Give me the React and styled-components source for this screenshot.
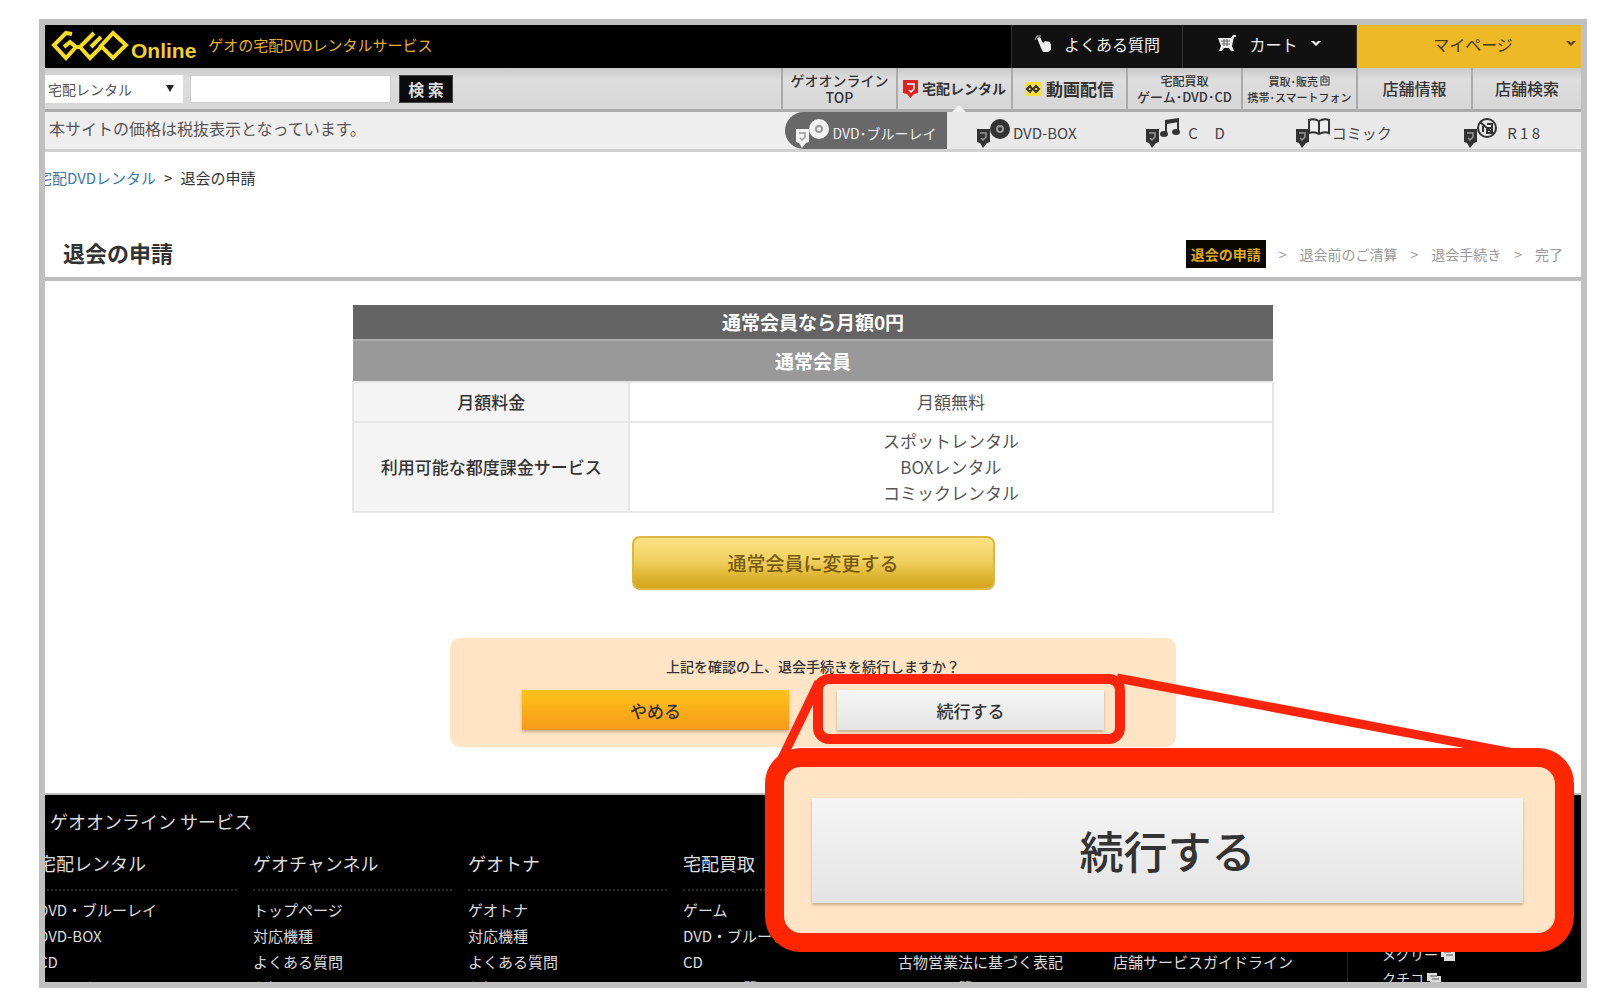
import React from "react";
import styled, { createGlobalStyle, css } from "styled-components";

const GlobalStyle = createGlobalStyle`
  * { box-sizing: border-box; }
  body {
    margin: 0;
    background: #fff;
    color: #333;
    font-family: "Noto Sans CJK JP", "Noto Sans", sans-serif;
    font-size: 15px;
  }
  a { color: inherit; text-decoration: none; }
  h1, h2, h3, p, ul, ol { margin: 0; padding: 0; list-style: none; }
  button, input, select { font-family: inherit; margin: 0; }
`;

const Page = styled.div`
  height: 100vh;
  padding: 19px 13px 15px 39px;
`;

const Frame = styled.div`
  display: flex;
  flex-direction: column;
  height: 100%;
  border: 6px solid #c0c0c0;
  overflow: hidden;
`;

const TopBar = styled.header`
  display: flex;
  flex: none;
  height: 43px;
  background: #000;
`;

const Brand = styled.div`
  display: flex;
  flex: 1;
  align-items: center;
  padding-left: 6px;
`;

const BrandName = styled.span`
  padding: 8px 0 0 2px;
  color: #f3cf2c;
  font: bold 21px/24px "Liberation Sans", sans-serif;
`;

const Tagline = styled.p`
  padding: 0 0 4px 12px;
  color: #e8b021;
  font-size: 15px;
  line-height: 36px;
`;

const TopLink = styled.a`
  display: flex;
  align-items: center;
  justify-content: ${(p) => (p.$spread ? "flex-end" : "center")};
  gap: 12px;
  width: ${(p) => p.$width}px;
  padding: 0 ${(p) => (p.$spread ? 4 : 0)}px 6px 0;
  border-left: 1px solid #333;
  background: ${(p) => (p.$gold ? "#edb926" : "#111")};
  color: ${(p) => (p.$gold ? "#4a3a10" : "#eee")};
  font-size: 16px;
`;

const MyPageLabel = styled.span`
  flex: 1;
  padding-left: 36px;
  text-align: center;
`;

const SearchBar = styled.div`
  display: flex;
  flex: none;
  height: 44px;
  border-bottom: 3px solid #ababab;
  background: linear-gradient(#c9c9c9, #dedede 12px, #d6d6d6);
`;

const SearchForm = styled.form`
  display: flex;
  flex: 1;
  align-items: center;
`;

const SelectWrap = styled.label`
  position: relative;
  width: 138px;
  height: 28px;
  margin-right: 7px;
  background: #fff;

  &::after {
    content: "";
    position: absolute;
    top: 10px;
    right: 9px;
    border: 4px solid transparent;
    border-top: 7px solid #222;
  }
`;

const CategorySelect = styled.select`
  width: 100%;
  height: 28px;
  padding: 0 3px;
  border: 0;
  appearance: none;
  background: transparent;
  color: #555;
  font-size: 14px;
`;

const SearchInput = styled.input`
  width: 201px;
  height: 28px;
  border: 1px solid #ccc;
  background: #fff;
`;

const SearchButton = styled.button`
  width: 54px;
  height: 28px;
  margin-left: 8px;
  padding: 0;
  border: 1px solid #444;
  background: #0b0b0b;
  color: #ddd;
  font-size: 16px;
  font-weight: bold;
  line-height: 24px;
`;

const ServiceNav = styled.nav`
  display: flex;
  width: 800px;
`;

const ServiceLink = styled.a`
  position: relative;
  display: flex;
  flex: 0 0 115px;
  align-items: center;
  justify-content: center;
  gap: 4px;
  border-left: 2px solid #aaa;
  color: #333;
  font-size: ${(p) => p.$size || 14}px;
  font-weight: ${(p) => (p.$bold ? 700 : 500)};
  line-height: 17px;
  text-align: center;
  white-space: nowrap;

  &:last-child { flex: 1; }

  ${(p) => p.$current && css`
    &::after {
      content: "";
      position: absolute;
      bottom: -3px;
      left: 54px;
      border: 7px solid transparent;
      border-top: 0;
      border-bottom-color: #f0f0f0;
    }
  `}
`;

const SmallLine = styled.span`
  display: block;
  font-size: ${(p) => p.$size}px;
  line-height: 16px;
`;

const NoticeBar = styled.div`
  display: flex;
  flex: none;
  height: 40px;
  border-bottom: 3px solid #d0d0d0;
  background: #efeeef;
`;

const Notice = styled.p`
  flex: 1;
  padding-left: 4px;
  color: #555;
  font-size: 16px;
  line-height: 32px;
`;

const CategoryNav = styled.nav`
  display: flex;
  width: 796px;
  background: #eae9ea;
  border-radius: 20px 0 0 20px;
`;

const CategoryLink = styled.a`
  display: flex;
  flex: 1;
  align-items: center;
  justify-content: center;
  gap: 2px;
  padding-top: 4px;
  color: ${(p) => (p.$current ? "#eee" : "#444")};
  font-size: ${(p) => (p.$current ? 14 : 15)}px;
  white-space: pre;

  ${(p) => p.$current && css`
    flex: 0 0 162px;
    border-radius: 20px 0 0 20px;
    background: #686868;
  `}
`;

const Main = styled.main`
  flex: none;
`;

const Breadcrumb = styled.nav`
  padding-top: 16px;
  margin-left: -8px;
  font-size: 15px;
  line-height: 20px;

  a { color: #3b78ab; }
  span { padding: 0 8px; }
`;

const TitleRow = styled.div`
  display: flex;
  align-items: center;
  justify-content: space-between;
  height: 93px;
  padding: 38px 18px 0;
  border-bottom: 4px solid #bebebe;
`;

const Title = styled.h1`
  font-size: 22px;
  line-height: 30px;
`;

const Steps = styled.ol`
  display: flex;
  align-items: center;
  gap: 13px;
  padding-top: 4px;
  color: #999;
  font-size: 14px;
  line-height: 28px;
`;

const Step = styled.li`
  ${(p) => p.$current && css`
    padding: 0 5px;
    background: #0a0800;
    color: #dba91c;
    font-weight: bold;
  `}
`;

const PlanTable = styled.table`
  width: 60%;
  margin: 24px auto 0;
  border-collapse: collapse;
  font-size: 17px;
  line-height: 26px;
  text-align: center;

  tbody th, td { border: 2px solid #e6e6e6; }
  tbody th { width: 30%; background: #f4f4f4; font-weight: 500; }
  td { color: #555; }
`;

const PlanHead = styled.th`
  height: ${(p) => (p.$sub ? 42 : 35)}px;
  padding: 0;
  background: ${(p) => (p.$sub ? "#999" : "#646464")};
  border-top: ${(p) => (p.$sub ? "2px solid #ababab" : "0")};
  color: #fff;
  font-size: 19px;
`;

const PlanRow = styled.tr`
  th, td { padding: ${(p) => (p.$tall ? 5 : 6)}px 0; }
`;

const ChangeButton = styled.button`
  display: block;
  width: 363px;
  height: 54px;
  margin: 23px auto 48px;
  padding: 0 0 2px;
  border: 2px solid #dfb643;
  border-radius: 8px;
  background: linear-gradient(#fde285, #f0d060 45%, #dcb22c 80%, #d3a51c);
  color: #795a10;
  font-size: 19px;
  font-weight: 500;
`;

const ConfirmBox = styled.section`
  position: relative;
  z-index: 1;
  width: 726px;
  height: 109px;
  margin: 0 auto 46px;
  padding-top: 17px;
  border-radius: 10px;
  background: #ffe5c6;
  text-align: center;
`;

const Question = styled.p`
  color: #333;
  font-size: 14px;
  font-weight: 500;
  line-height: 22px;
`;

const Choices = styled.div`
  display: flex;
  justify-content: center;
  gap: 48px;
  padding-top: 13px;
`;

const ChoiceButton = styled.button`
  width: ${(p) => (p.$large ? 711 : 267)}px;
  height: ${(p) => (p.$large ? 105 : 40)}px;
  padding: 0;
  border: 0;
  background: ${(p) => (p.$gold ? "linear-gradient(#ffc31c, #f69a18)" : "linear-gradient(#f5f5f5, #e4e4e4)")};
  box-shadow: 0 2px 3px rgba(90, 70, 40, 0.35);
  color: #333;
  font-size: ${(p) => (p.$large ? 44 : 17)}px;
  font-weight: 500;
`;

const Highlight = styled.div`
  position: absolute;
  top: 36px;
  left: 363px;
  width: 312px;
  height: 70px;
  border: 10px solid #fc250c;
  border-radius: 16px;
  pointer-events: none;
`;

const Pointer = styled.svg`
  position: absolute;
  top: 32px;
  left: 315px;
  pointer-events: none;
`;

const Magnified = styled.div`
  position: absolute;
  top: 110px;
  left: 315px;
  display: flex;
  align-items: center;
  justify-content: center;
  width: 809px;
  height: 204px;
  padding-right: 4px;
  border: 19px solid #ff2600;
  border-radius: 36px;
  background: #ffe5c6;
`;

const Footer = styled.footer`
  flex: 1;
  min-height: 0;
  border-top: 2px solid #bbb;
  background: #000;
  color: #ddd;
  overflow: hidden;
`;

const FooterTitle = styled.h2`
  padding: 12px 0 0 5px;
  font-size: 18px;
  font-weight: 400;
  line-height: 28px;
`;

const FooterColumns = styled.div`
  display: flex;
  gap: 16px;
  margin-left: -7px;
`;

const FooterColumn = styled.section`
  flex: 0 0 199px;
  padding-top: ${(p) => (p.$low ? 114 : 14)}px;
  white-space: nowrap;
`;

const FooterHead = styled.h3`
  height: 42px;
  border-bottom: 2px dotted #2b2b2b;
  font-size: 18px;
  font-weight: 400;
  line-height: 28px;
`;

const FooterList = styled.ul`
  padding-top: ${(p) => (p.$flush ? 0 : 6)}px;
  font-size: 15px;
  line-height: 26px;
`;

const SideColumn = styled.section`
  flex: 1;
  margin: 107px 0 0 19px;
  padding-left: 34px;
  border-left: 1px solid #222;
  font-size: 14px;
  line-height: 24px;

  svg { vertical-align: -1px; }
`;

const GeoLogo = () => (
  <svg width="78" height="36" viewBox="0 0 78 36" fill="none" stroke="#f7dc22" strokeWidth="4">
    <path d="M21 5 15 4 3 16 15 29 25 18 19 13 13 18" />
    <path d="M43 4 29 18 25 18M29 18 39 29 50 18M40 18 50 8M34 13 43 4" />
    <path d="M62 4 75 16 62 29 50 17Z" />
  </svg>
);

const Chevron = ({ color }) => (
  <svg width="12" height="7" viewBox="0 0 12 7"><path d="M1 1h3l2 2 2-2h3L6 6Z" fill={color} /></svg>
);

const HandIcon = () => (
  <svg width="18" height="18" viewBox="0 0 18 18" fill="#eee">
    <path d="M3 3l3-1 3 6 2-2 5 1 1 3v5l-3 2H9l-2-4z" />
    <path d="M1 5 3 1h4" stroke="#bbb" fill="none" />
  </svg>
);

const CartIcon = () => (
  <svg width="20" height="18" viewBox="0 0 20 18">
    <path d="M1 3h13l2-3h3v2h-2l-2 9 2 5h-3l-2-3H7l-2 3H2l2-5z" fill="#eee" />
    <path d="M4 6h9M5 9h8M7 4v7M10 4v7" stroke="#666" />
  </svg>
);

const ShieldIcon = () => (
  <svg width="15" height="19" viewBox="0 0 15 19">
    <path d="M0 1h15v13l-4 1-3.500 4L4 15l-4-1z" fill="#e02020" />
    <path d="M4 5h7v5l-3 3-2-2" fill="none" stroke="#fff" strokeWidth="1.500" />
  </svg>
);

const ChannelIcon = () => (
  <svg width="17" height="14" viewBox="0 0 17 14">
    <rect width="17" height="14" rx="3" fill="#f6e13a" />
    <path d="M2 7 5 4 7 7 5 10ZM8 7 11 4 14 7 11 10Z" fill="none" stroke="#333" strokeWidth="2" />
  </svg>
);

const PhoneIcon = () => (
  <svg width="10" height="11" viewBox="0 0 10 11" fill="none" stroke="#333">
    <rect x="1" y="2" width="8" height="8" /><path d="M3 4h4v3H3zM4 0v2" />
  </svg>
);

const pictures = {
  disc: (c, hole) => (
    <g><circle cx="24" cy="11" r="10" fill={c} /><circle cx="24" cy="11" r="4" fill={hole} /><circle cx="24" cy="11" r="2" fill={c} /></g>
  ),
  note: (c) => (
    <g fill={c}><path d="M20 2 34 0v4L22 6v10h-2zM32 2h2v12h-2z" /><ellipse cx="19" cy="16" rx="4" ry="3" /><ellipse cx="31" cy="14" rx="4" ry="3" /></g>
  ),
  book: (c) => (
    <path d="M24 3Q19 0 14 2V15Q19 13 24 16Q29 13 34 15V2Q29 0 24 3V16" fill="#eee" stroke={c} strokeWidth="2" />
  ),
  adult: (c) => (
    <g fill="none" stroke={c} strokeWidth="2"><circle cx="24" cy="10" r="9" /><path d="M17 4 31 16M20 6v8M24 6h5v4h-5v5h5v-5" /></g>
  ),
};

const CategoryIcon = ({ kind, color = "#333", hole = "#999" }) => (
  <svg width="35" height="30" viewBox="0 0 35 30">
    {pictures[kind](color, hole)}
    <path d="M1 11h13v13l-3 1-4 5-3-5-3-1z" fill={color} />
    <path d="M4 15h6v4l-3 3-2-2" fill="none" stroke={hole} strokeWidth="1.500" />
  </svg>
);

const WindowIcon = () => (
  <svg width="14" height="12" viewBox="0 0 14 12">
    <path d="M0 0h10v3h4v9H3V8H0z" fill="#ddd" /><path d="M3 3h7M5 6h7" stroke="#555" />
  </svg>
);

const footerColumns = [
  { head: "宅配レンタル", items: ["DVD・ブルーレイ", "DVD-BOX", "CD", "コミック"] },
  { head: "ゲオチャンネル", items: ["トップページ", "対応機種", "よくある質問", "お知らせ"] },
  { head: "ゲオトナ", items: ["ゲオトナ", "対応機種", "よくある質問", "お知らせ"] },
  { head: "宅配買取", items: ["ゲーム", "DVD・ブルーレイ", "CD", "よくある質問"] },
];

export default function App() {
  return (
    <Page>
      <GlobalStyle />
      <Frame>
        <TopBar>
          <Brand>
            <GeoLogo />
            <BrandName>Online</BrandName>
            <Tagline>ゲオの宅配DVDレンタルサービス</Tagline>
          </Brand>
          <TopLink href="#faq" $width={171}><HandIcon />よくある質問</TopLink>
          <TopLink href="#cart" $width={174}><CartIcon />カート<Chevron color="#eee" /></TopLink>
          <TopLink href="#mypage" $width={225} $gold $spread>
            <MyPageLabel>マイページ</MyPageLabel><Chevron color="#5a4510" />
          </TopLink>
        </TopBar>

        <SearchBar>
          <SearchForm onSubmit={(e) => e.preventDefault()}>
            <SelectWrap>
              <CategorySelect aria-label="カテゴリ"><option>宅配レンタル</option></CategorySelect>
            </SelectWrap>
            <SearchInput type="text" aria-label="キーワード" />
            <SearchButton type="submit">検 索</SearchButton>
          </SearchForm>
          <ServiceNav>
            <ServiceLink href="#top">ゲオオンライン<br />TOP</ServiceLink>
            <ServiceLink href="#rental" $bold $current><ShieldIcon />宅配レンタル</ServiceLink>
            <ServiceLink href="#video" $bold $size={17}><ChannelIcon />動画配信</ServiceLink>
            <ServiceLink href="#sell">
              <span><SmallLine $size={12}>宅配買取</SmallLine><SmallLine $size={13}>ゲーム･DVD･CD</SmallLine></span>
            </ServiceLink>
            <ServiceLink href="#mobile">
              <span><SmallLine $size={11}>買取･販売 <PhoneIcon /></SmallLine><SmallLine $size={11}>携帯･スマートフォン</SmallLine></span>
            </ServiceLink>
            <ServiceLink href="#shops" $size={16}>店舗情報</ServiceLink>
            <ServiceLink href="#find" $size={16}>店舗検索</ServiceLink>
          </ServiceNav>
        </SearchBar>

        <NoticeBar>
          <Notice>本サイトの価格は税抜表示となっています。</Notice>
          <CategoryNav>
            <CategoryLink href="#dvd" $current><CategoryIcon kind="disc" color="#f2f2f2" />DVD･ブルーレイ</CategoryLink>
            <CategoryLink href="#box"><CategoryIcon kind="disc" />DVD-BOX</CategoryLink>
            <CategoryLink href="#cd"><CategoryIcon kind="note" />{"  C     D"}</CategoryLink>
            <CategoryLink href="#comic"><CategoryIcon kind="book" />コミック</CategoryLink>
            <CategoryLink href="#r18"><CategoryIcon kind="adult" />{"  R 1 8"}</CategoryLink>
          </CategoryNav>
        </NoticeBar>

        <Main>
          <Breadcrumb><a href="#rental">宅配DVDレンタル</a><span>&gt;</span>退会の申請</Breadcrumb>
          <TitleRow>
            <Title>退会の申請</Title>
            <Steps>
              <Step $current>退会の申請</Step><li>&gt;</li>
              <Step>退会前のご清算</Step><li>&gt;</li>
              <Step>退会手続き</Step><li>&gt;</li>
              <Step>完了</Step>
            </Steps>
          </TitleRow>

          <PlanTable>
            <thead>
              <tr><PlanHead colSpan={2}>通常会員なら月額0円</PlanHead></tr>
              <tr><PlanHead colSpan={2} $sub>通常会員</PlanHead></tr>
            </thead>
            <tbody>
              <PlanRow><th scope="row">月額料金</th><td>月額無料</td></PlanRow>
              <PlanRow $tall>
                <th scope="row">利用可能な都度課金サービス</th>
                <td>スポットレンタル<br />BOXレンタル<br />コミックレンタル</td>
              </PlanRow>
            </tbody>
          </PlanTable>

          <ChangeButton type="button">通常会員に変更する</ChangeButton>

          <ConfirmBox>
            <Question>上記を確認の上、退会手続きを続行しますか？</Question>
            <Choices>
              <ChoiceButton type="button" $gold>やめる</ChoiceButton>
              <ChoiceButton type="button">続行する</ChoiceButton>
            </Choices>
            <Highlight />
            <Pointer width="809" height="110" viewBox="0 0 809 110" stroke="#fc250c" strokeWidth="9">
              <path d="M54 12 9 105" />
              <path d="M352 8 765 86" />
            </Pointer>
            <Magnified><ChoiceButton type="button" $large>続行する</ChoiceButton></Magnified>
          </ConfirmBox>
        </Main>

        <Footer>
          <FooterTitle>ゲオオンライン サービス</FooterTitle>
          <FooterColumns>
            {footerColumns.map((column) => (
              <FooterColumn key={column.head}>
                <FooterHead>{column.head}</FooterHead>
                <FooterList>
                  {column.items.map((item) => <li key={item}><a href="#service">{item}</a></li>)}
                </FooterList>
              </FooterColumn>
            ))}
            <FooterColumn $low>
              <FooterList $flush>
                <li><a href="#law">古物営業法に基づく表記</a></li>
                <li><a href="#faq">よくある質問</a></li>
              </FooterList>
            </FooterColumn>
            <FooterColumn $low>
              <FooterList $flush><li><a href="#guide">店舗サービスガイドライン</a></li></FooterList>
            </FooterColumn>
            <SideColumn>
              <ul>
                <li><a href="#meguri">メグリー <WindowIcon /></a></li>
                <li><a href="#kuchiko">クチコ <WindowIcon /></a></li>
              </ul>
            </SideColumn>
          </FooterColumns>
        </Footer>
      </Frame>
    </Page>
  );
}
